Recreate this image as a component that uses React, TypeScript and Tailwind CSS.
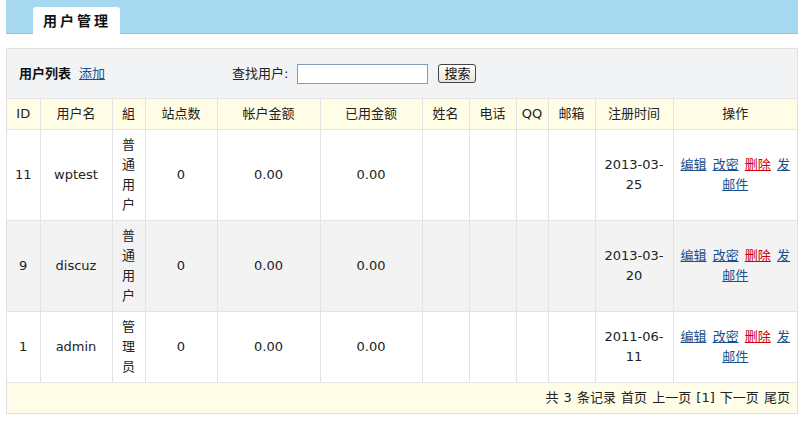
import React from "react";

const cols = [33, 72, 33, 72, 103, 102, 47, 47, 32, 47, 78, 124];
const heads = ["ID", "用户名", "組", "站点数", "帐户金额", "已用金额", "姓名", "电话", "QQ", "邮箱", "注册时间", "操作"];

const rows = [
  { id: "11", name: "wptest", group: "普通用户", date: "2013-03-25", bg: "bg-white" },
  { id: "9", name: "discuz", group: "普通用户", date: "2013-03-20", bg: "bg-[#f3f3f3]" },
  { id: "1", name: "admin", group: "管理员", date: "2011-06-11", bg: "bg-white" },
];

const td = "border border-[#e4e4e4] px-[5px] py-[5px] text-center align-middle";

export default function App() {
  return (
    <div
      className="w-[809px] h-[426px] bg-white text-[13px] leading-[20px] text-[#222] overflow-hidden"
      style={{ fontFamily: '"DejaVu Sans", "Noto Sans CJK SC", sans-serif' }}
    >
      <div className="ml-[6px] w-[792px] h-[34px] bg-[#a6d9f0] border-b border-[#8dc6e4] flex items-end pl-[27px]">
        <div className="w-[87px] h-[27px] -mb-px bg-white rounded-t-[3px] flex items-center pl-[10px] font-bold text-[14px] tracking-[3px] text-[#111]">
          用户管理
        </div>
      </div>

      <div className="mt-[14px] ml-[6px] w-[792px] border border-[#e1e1e1] bg-[#f2f3f5]">
        <div className="h-[50px] border-b border-[#e4e4e4] flex items-center pl-[12px]">
          <div className="w-[213px] flex items-center">
            <span className="font-bold text-[#111]">用户列表</span>
            <a href="#" className="ml-[8px] text-[#1a4f8c] underline">添加</a>
          </div>
          <span>查找用户:</span>
          <input
            type="text"
            className="ml-[9px] w-[131px] h-[20px] border border-[#7f9db9] bg-white outline-none"
          />
          <button
            type="button"
            className="ml-[10px] w-[38px] h-[19px] border border-[#444] rounded-[3px] bg-gradient-to-b from-white to-[#e6e4dc] text-[13px] leading-[17px] text-[#111] flex items-center justify-center"
          >
            搜索
          </button>
        </div>

        <table className="w-full table-fixed border-collapse border-hidden">
          <colgroup>
            {cols.map((w, i) => (
              <col key={i} style={{ width: w }} />
            ))}
          </colgroup>
          <thead>
            <tr className="bg-[#fffde6]">
              {heads.map((h) => (
                <th key={h} className={`${td} font-normal`}>
                  {h}
                </th>
              ))}
            </tr>
          </thead>
          <tbody>
            {rows.map((r) => (
              <tr key={r.id} className={r.bg}>
                <td className={td}>{r.id}</td>
                <td className={td}>{r.name}</td>
                <td className={td}>{r.group}</td>
                <td className={td}>0</td>
                <td className={td}>0.00</td>
                <td className={td}>0.00</td>
                <td className={td}></td>
                <td className={td}></td>
                <td className={td}></td>
                <td className={td}></td>
                <td className={td}>{r.date}</td>
                <td className={`${td} [word-spacing:2px]`}>
                  <a href="#" className="text-[#1a4f8c] underline">编辑</a>{" "}
                  <a href="#" className="text-[#1a4f8c] underline">改密</a>{" "}
                  <a href="#" className="text-[#d00000] underline">删除</a>{" "}
                  <a href="#" className="text-[#1a4f8c] underline">发</a>
                  <a href="#" className="text-[#1a4f8c] underline">邮件</a>
                </td>
              </tr>
            ))}
            <tr className="bg-[#fffde8]">
              <td colSpan={12} className="border border-[#e4e4e4] py-[5px] pr-[7px] text-right [word-spacing:1px]">
                共 3 条记录 首页 上一页 [1] 下一页 尾页
              </td>
            </tr>
          </tbody>
        </table>
      </div>
    </div>
  );
}
